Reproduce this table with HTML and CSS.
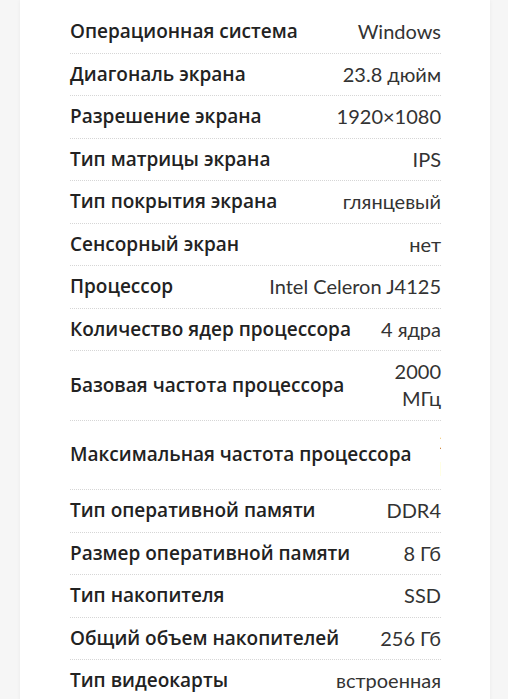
FILE: index.html
```html
<!DOCTYPE html>
<html lang="ru">
<head>
<meta charset="utf-8">
<link rel="stylesheet" href="styles.css">
</head>
<body>
<div class="page">
  <section class="card">
    <dl class="specs">
      <div class="row"><dt>Операционная система</dt><dd>Windows</dd></div>
      <div class="row"><dt>Диагональ экрана</dt><dd>23.8 дюйм</dd></div>
      <div class="row"><dt>Разрешение экрана</dt><dd>1920×1080</dd></div>
      <div class="row"><dt>Тип матрицы экрана</dt><dd>IPS</dd></div>
      <div class="row"><dt>Тип покрытия экрана</dt><dd>глянцевый</dd></div>
      <div class="row"><dt>Сенсорный экран</dt><dd>нет</dd></div>
      <div class="row"><dt>Процессор</dt><dd>Intel Celeron J4125</dd></div>
      <div class="row"><dt>Количество ядер процессора</dt><dd>4 ядра</dd></div>
      <div class="row"><dt>Базовая частота процессора</dt><dd>2000 МГц</dd></div>
      <div class="row"><dt>Максимальная частота процессора</dt><dd class="clip">2700 МГц</dd></div>
      <div class="row"><dt>Тип оперативной памяти</dt><dd>DDR4</dd></div>
      <div class="row"><dt>Размер оперативной памяти</dt><dd>8 Гб</dd></div>
      <div class="row"><dt>Тип накопителя</dt><dd>SSD</dd></div>
      <div class="row"><dt>Общий объем накопителей</dt><dd>256 Гб</dd></div>
      <div class="row"><dt>Тип видеокарты</dt><dd>встроенная</dd></div>
    </dl>
  </section>
</div>
</body>
</html>
```

FILE: styles.css
```css
html, body {
  margin: 0;
  padding: 0;
  background: #f6f6f6;
}
.page {
  padding: 0 18px 0 20px;
  height: 699px;
  overflow: hidden;
}
.card {
  background: #fff;
  box-shadow: 0 0 4px rgba(0,0,0,0.05);
  padding: 11px 49px 0 50px;
  min-height: 720px;
}
.specs {
  margin: 0;
}
.row {
  display: flex;
  align-items: center;
  padding: 7.25px 0;
  border-bottom: 1px dotted #d6d6d6;
  line-height: 27px;
}
.row dt {
  flex: none;
  white-space: nowrap;
  font-family: "Open Sans", sans-serif;
  font-weight: 600;
  font-size: 19px;
  color: #222;
}
.row dd {
  flex: 1 1 auto;
  min-width: 0;
  margin: 0 0 0 28px;
  text-align: right;
  font-family: "Lato", "Open Sans", sans-serif;
  font-size: 20px;
  color: #333;
}
.row dd.clip {
  overflow: hidden;
}
```
